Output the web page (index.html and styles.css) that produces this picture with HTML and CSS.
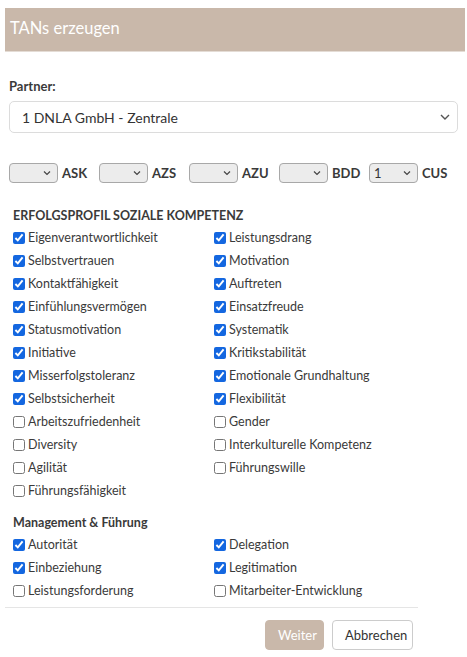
FILE: index.html
```html
<!DOCTYPE html>
<html lang="de">
<head>
  <meta charset="UTF-8" />
  <title>TANs erzeugen</title>
  <link rel="stylesheet" href="styles.css">
</head>
<body>
  <div class="modal">
    <div class="modal-header">TANs erzeugen</div>
    <div class="modal-body">
      <label class="field-label">Partner:</label>
      <div class="select-wrap big">
        <select class="form-select"><option>1 DNLA GmbH - Zentrale</option></select>
        <svg class="chev" width="10" height="6" viewBox="0 0 10 6"><path d="M1 1l4 4 4-4" fill="none" stroke="#555" stroke-width="1.4"/></svg>
      </div>

      <div class="counts">
        <div class="count"><div class="select-wrap small"><select class="mini"><option></option></select><svg class="chev" width="8" height="5" viewBox="0 0 8 5"><path d="M1 1l3 3 3-3" fill="none" stroke="#444" stroke-width="1.2"/></svg></div><b>ASK</b></div>
        <div class="count"><div class="select-wrap small"><select class="mini"><option></option></select><svg class="chev" width="8" height="5" viewBox="0 0 8 5"><path d="M1 1l3 3 3-3" fill="none" stroke="#444" stroke-width="1.2"/></svg></div><b>AZS</b></div>
        <div class="count"><div class="select-wrap small"><select class="mini"><option></option></select><svg class="chev" width="8" height="5" viewBox="0 0 8 5"><path d="M1 1l3 3 3-3" fill="none" stroke="#444" stroke-width="1.2"/></svg></div><b>AZU</b></div>
        <div class="count"><div class="select-wrap small"><select class="mini"><option></option></select><svg class="chev" width="8" height="5" viewBox="0 0 8 5"><path d="M1 1l3 3 3-3" fill="none" stroke="#444" stroke-width="1.2"/></svg></div><b>BDD</b></div>
        <div class="count"><div class="select-wrap small"><select class="mini"><option>1</option></select><svg class="chev" width="8" height="5" viewBox="0 0 8 5"><path d="M1 1l3 3 3-3" fill="none" stroke="#444" stroke-width="1.2"/></svg></div><b>CUS</b></div>
      </div>

      <h4 class="group-title upper">ERFOLGSPROFIL SOZIALE KOMPETENZ</h4>
      <div class="checks">
        <label><input type="checkbox" checked>Eigenverantwortlichkeit</label>
        <label><input type="checkbox" checked>Leistungsdrang</label>
        <label><input type="checkbox" checked>Selbstvertrauen</label>
        <label><input type="checkbox" checked>Motivation</label>
        <label><input type="checkbox" checked>Kontaktfähigkeit</label>
        <label><input type="checkbox" checked>Auftreten</label>
        <label><input type="checkbox" checked>Einfühlungsvermögen</label>
        <label><input type="checkbox" checked>Einsatzfreude</label>
        <label><input type="checkbox" checked>Statusmotivation</label>
        <label><input type="checkbox" checked>Systematik</label>
        <label><input type="checkbox" checked>Initiative</label>
        <label><input type="checkbox" checked>Kritikstabilität</label>
        <label><input type="checkbox" checked>Misserfolgstoleranz</label>
        <label><input type="checkbox" checked>Emotionale Grundhaltung</label>
        <label><input type="checkbox" checked>Selbstsicherheit</label>
        <label><input type="checkbox" checked>Flexibilität</label>
        <label><input type="checkbox">Arbeitszufriedenheit</label>
        <label><input type="checkbox">Gender</label>
        <label><input type="checkbox">Diversity</label>
        <label><input type="checkbox">Interkulturelle Kompetenz</label>
        <label><input type="checkbox">Agilität</label>
        <label><input type="checkbox">Führungswille</label>
        <label><input type="checkbox">Führungsfähigkeit</label>
      </div>

      <h4 class="group-title">Management &amp; Führung</h4>
      <div class="checks">
        <label><input type="checkbox" checked>Autorität</label>
        <label><input type="checkbox" checked>Delegation</label>
        <label><input type="checkbox" checked>Einbeziehung</label>
        <label><input type="checkbox" checked>Legitimation</label>
        <label><input type="checkbox">Leistungsforderung</label>
        <label><input type="checkbox">Mitarbeiter-Entwicklung</label>
      </div>
    </div>
    <div class="modal-footer">
      <button class="btn btn-primary">Weiter</button>
      <button class="btn btn-default">Abbrechen</button>
    </div>
  </div>
</body>
</html>
```

FILE: styles.css
```css
body { margin: 0; padding: 8px 2px 0 5px; font-family: Lato, "Liberation Sans", sans-serif; color: #3a3a3a; font-size: 13px; background: #fff; }
.modal { width: 460px; }
.modal-header { background: #c9b8aa; color: #fff; font-size: 16.5px; height: 43px; line-height: 40px; padding-left: 5px; border-bottom: 1px solid #e4dcd5; }
.modal-body { padding: 26px 0 0 4px; width: 449px; }
.field-label { display: block; font-weight: 700; font-size: 13px; margin-bottom: 7px; }
.select-wrap { position: relative; display: inline-block; }
.select-wrap .chev { position: absolute; top: 50%; transform: translateY(-50%); pointer-events: none; }
.select-wrap.big { display: block; }
.select-wrap.big .chev { right: 8px; }
.select-wrap.small .chev { right: 7px; }
.form-select { appearance: none; width: 100%; height: 32px; border: 1px solid #dcdcdc; border-radius: 5px; background: #fff; font: 14px Lato, sans-serif; color: #333; padding: 0 12px; }
.counts { display: flex; gap: 12px; margin-top: 30px; }
.count { display: flex; align-items: center; gap: 4px; width: 78px; }
.count b { font-size: 13px; }
.mini { appearance: none; width: 49px; height: 20px; border: 1px solid #a8a8a8; border-radius: 4px; background: #ececec; font: 13px Lato, sans-serif; color: #333; padding: 0 4px; }
.group-title { font-size: 12.5px; font-weight: 700; margin: 13px 0 3px 4px; }
.group-title.upper { margin-top: 25px; }
.checks { display: grid; grid-template-columns: 201px 1fr; grid-auto-rows: 23px; padding-left: 4px; }
.checks label { display: flex; align-items: center; gap: 3px; font-size: 12.5px; }
.checks input { margin: 0; width: 12px; height: 12px; accent-color: #1467e0; }
.modal-footer { width: 408px; border-top: 1px solid #e5e5e5; margin-top: 5px; padding: 12px 5px 0 0; display: flex; justify-content: flex-end; gap: 8px; }
.btn { font: 13px Lato, sans-serif; height: 30px; border-radius: 4px; padding: 0 12px; }
.btn-primary { background: #c9b8aa; color: #fff; border: 1px solid #c9b8aa; width: 59px; }
.btn-default { background: #fff; color: #333; border: 1px solid #ccc; width: 81px; }
```
